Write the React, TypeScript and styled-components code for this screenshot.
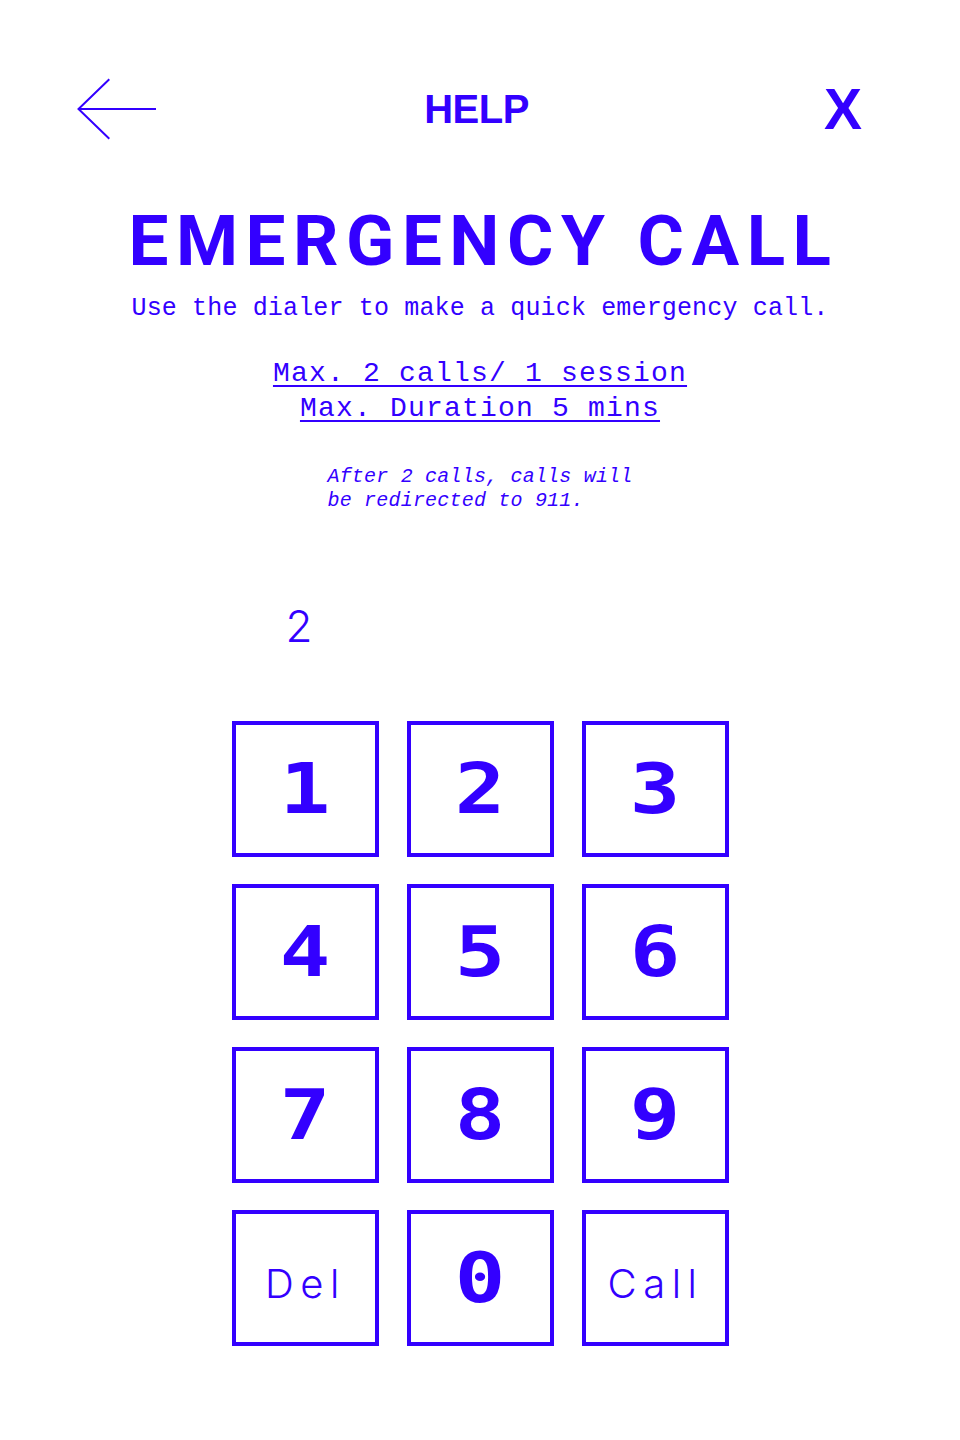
import React from "react";
import styled, { createGlobalStyle } from "styled-components";

const BLUE = "#3300ff";

const GlobalStyle = createGlobalStyle`
  html, body {
    margin: 0;
    padding: 0;
    background: #ffffff;
  }
  body {
    font-family: "Liberation Sans", Arial, sans-serif;
    color: ${BLUE};
  }
  * { box-sizing: border-box; }
`;

const Page = styled.main`
  width: 960px;
  min-height: 1440px;
  display: flex;
  flex-direction: column;
  align-items: center;
  padding-top: 78px;
`;

const Header = styled.header`
  width: 100%;
  height: 62px;
  display: grid;
  grid-template-columns: 1fr auto 1fr;
  align-items: center;
  padding: 0 84px 0 77px;
`;

const BackButton = styled.button`
  justify-self: start;
  display: flex;
  padding: 0;
  border: 0;
  background: none;
  cursor: pointer;
`;

const HeaderTitle = styled.h2`
  margin: 0;
  font-family: "Liberation Sans", Arial, sans-serif;
  font-weight: 700;
  font-size: 40px;
  line-height: 1;
  letter-spacing: -0.5px;
  color: ${BLUE};
`;

const CloseButton = styled.button`
  justify-self: end;
  margin-right: 14px;
  padding: 0;
  border: 0;
  background: none;
  font-family: "Liberation Sans", Arial, sans-serif;
  font-weight: 700;
  font-size: 57px;
  line-height: 1;
  color: ${BLUE};
  cursor: pointer;
`;

const Heading = styled.h1`
  margin: 65px 0 0;
  padding-left: 7px;
  font-family: Roboto, "Liberation Sans", sans-serif;
  font-weight: 700;
  font-size: 71px;
  line-height: 1;
  letter-spacing: 7.5px;
  text-align: center;
  color: ${BLUE};
`;

const Subtitle = styled.p`
  margin: 20px 0 0;
  font-family: "Liberation Mono", monospace;
  font-size: 25px;
  line-height: 1;
  letter-spacing: 0.15px;
  text-align: center;
`;

const Limits = styled.div`
  margin-top: 35px;
  display: flex;
  flex-direction: column;
  align-items: center;
`;

const LimitLine = styled.span`
  font-family: "Liberation Mono", monospace;
  font-size: 28px;
  line-height: 35px;
  letter-spacing: 1.2px;
  text-decoration: underline;
  text-decoration-thickness: 2px;
  text-underline-offset: 4px;
`;

const Note = styled.p`
  margin: 39px 0 0;
  font-family: "Liberation Mono", monospace;
  font-style: italic;
  font-size: 20px;
  line-height: 24px;
  letter-spacing: 0.2px;
  text-align: left;
`;

const Display = styled.div`
  width: 497px;
  margin-top: 91px;
  padding-left: 54px;
  font-family: Inter, "Liberation Sans", sans-serif;
  font-weight: 300;
  font-size: 44px;
  line-height: 1;
`;

const Keypad = styled.div`
  margin-top: 73px;
  display: grid;
  grid-template-columns: repeat(3, 147px);
  grid-auto-rows: 136px;
  column-gap: 28px;
  row-gap: 27px;
`;

const Key = styled.button<{ $word?: boolean }>`
  display: flex;
  align-items: center;
  justify-content: center;
  padding: ${(p) => (p.$word ? "11px 0 0 1px" : "0")};
  border: 4px solid ${BLUE};
  background: #ffffff;
  color: ${BLUE};
  cursor: pointer;
  font-family: ${(p) =>
    p.$word
      ? `Inter, "Liberation Sans", sans-serif`
      : `"DejaVu Sans Mono", monospace`};
  font-weight: ${(p) => (p.$word ? 300 : 700)};
  font-size: ${(p) => (p.$word ? "40px" : "70px")};
  letter-spacing: ${(p) => (p.$word ? "6.5px" : "0")};
  line-height: 1;
`;

const Digit = styled.span`
  display: inline-block;
  transform: scaleX(1.2);
`;

const keys: { label: string; word?: boolean }[] = [
  { label: "1" },
  { label: "2" },
  { label: "3" },
  { label: "4" },
  { label: "5" },
  { label: "6" },
  { label: "7" },
  { label: "8" },
  { label: "9" },
  { label: "Del", word: true },
  { label: "0" },
  { label: "Call", word: true },
];

const ArrowIcon = () => (
  <svg width="80" height="62" viewBox="0 0 80 62" fill="none">
    <path
      d="M79 31 H1.5 M32.3 1.3 L1.5 31 L32.3 60.7"
      stroke={BLUE}
      strokeWidth="2"
      strokeLinejoin="miter"
    />
  </svg>
);

export default function App() {
  return (
    <>
      <GlobalStyle />
      <Page>
        <Header>
          <BackButton aria-label="Back">
            <ArrowIcon />
          </BackButton>
          <HeaderTitle>HELP</HeaderTitle>
          <CloseButton aria-label="Close">X</CloseButton>
        </Header>

        <Heading>EMERGENCY CALL</Heading>
        <Subtitle>Use the dialer to make a quick emergency call.</Subtitle>

        <Limits>
          <LimitLine>Max. 2 calls/ 1 session</LimitLine>
          <LimitLine>Max. Duration 5 mins</LimitLine>
        </Limits>

        <Note>
          After 2 calls, calls will
          <br />
          be redirected to 911.
        </Note>

        <Display>2</Display>

        <Keypad>
          {keys.map((k) => (
            <Key key={k.label} $word={k.word}>
              {k.word ? k.label : <Digit>{k.label}</Digit>}
            </Key>
          ))}
        </Keypad>
      </Page>
    </>
  );
}
